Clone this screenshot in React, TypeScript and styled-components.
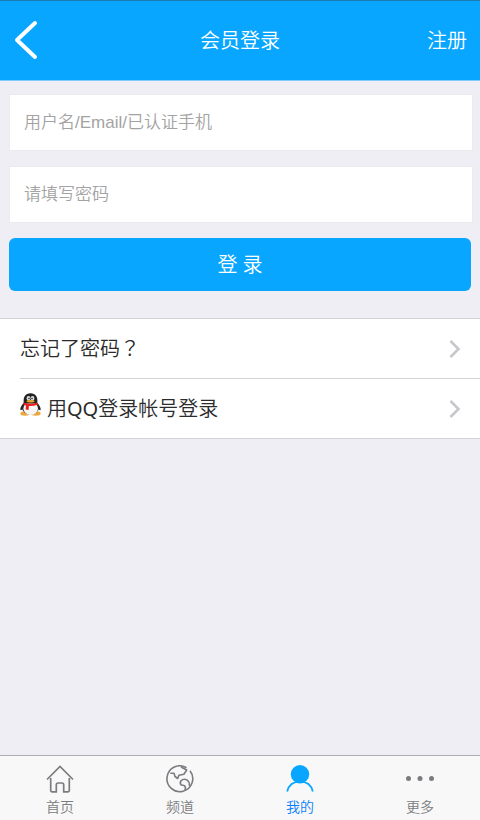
import React from "react";
import styled, { createGlobalStyle } from "styled-components";

const GlobalStyle = createGlobalStyle`
  * { box-sizing: border-box; }
  body {
    margin: 0;
    background: #efeef4;
    color: #2b2b2b;
    font-family: "Noto Sans", "Noto Sans CJK SC", sans-serif;
    font-size: 20px;
    font-weight: 350;
  }
  button, input { font-family: inherit; font-weight: inherit; }
`;

const Page = styled.div`
  display: flex;
  flex-direction: column;
  min-height: 100vh;
`;

const Header = styled.header`
  display: grid;
  grid-template-columns: 1fr auto 1fr;
  align-items: center;
  height: 81px;
  padding: 0 13px;
  background: #08a6ff;
  border-top: 1px solid #1b7bb5;
  border-bottom: 1px solid #7fcdfa;
  color: #fff;
`;

const BackButton = styled.button`
  display: flex;
  justify-self: start;
  padding: 0 0 2px;
  border: 0;
  background: none;
  color: inherit;
  cursor: pointer;
`;

const Title = styled.h1`
  margin: 0;
  font-size: 20px;
  font-weight: inherit;
  line-height: 30px;
`;

const RegisterLink = styled.a`
  justify-self: end;
  color: inherit;
  line-height: 30px;
  text-decoration: none;
`;

const Main = styled.main`
  flex: 1;
`;

const Form = styled.form`
  display: flex;
  flex-direction: column;
  gap: 15px;
  padding: 13px 7px 27px 9px;
`;

const Field = styled.input`
  width: 100%;
  height: 57px;
  padding: 0 14px;
  border: 1px solid #ebebed;
  border-radius: 0;
  outline: 0;
  background: #fff;
  color: #333;
  font-family: "Liberation Sans", "Noto Sans CJK SC", sans-serif;
  font-size: 17px;
  &::placeholder { color: #a3a3a3; opacity: 1; }
`;

const LoginButton = styled.button`
  height: 53px;
  margin-right: 2px;
  padding: 0;
  border: 0;
  border-radius: 6px;
  background: #08a6ff;
  color: #fff;
  font-size: 20px;
  line-height: 30px;
  cursor: pointer;
`;

const LinkList = styled.nav`
  padding-left: 20px;
  background: #fff;
  border-top: 1px solid #d3d3d6;
  border-bottom: 1px solid #d3d3d6;
`;

const LinkRow = styled.a`
  display: flex;
  align-items: center;
  gap: 6px;
  height: 59px;
  padding-right: 19px;
  color: inherit;
  line-height: 30px;
  text-decoration: none;
  & + & {
    height: 60px;
    border-top: 1px solid #d3d3d6;
  }
`;

const RowLabel = styled.span`
  flex: 1;
`;

const Latin = styled.span`
  font-weight: 400;
`;

const CenteredMark = styled.span`
  font-family: "Noto Sans CJK TC", sans-serif;
`;

const PenguinArt = styled.svg`
  margin-bottom: 8px;
`;

const TabBar = styled.nav`
  display: grid;
  grid-template-columns: repeat(4, 1fr);
  height: 65px;
  background: #f8f8f8;
  border-top: 1px solid #adadb0;
`;

const Tab = styled.a<{ $active?: boolean }>`
  display: flex;
  flex-direction: column;
  align-items: center;
  gap: 4px;
  padding-top: 9px;
  color: ${(p) => (p.$active ? "#0b7ffb" : "#7b7c80")};
  font-size: 14px;
  line-height: 20px;
  text-decoration: none;
`;

const BackIcon = () => (
  <svg width="26" height="40" viewBox="0 0 26 40" fill="none" stroke="#fff" strokeWidth="4" aria-hidden="true">
    <path d="M22 3 4 20l18 17" strokeLinejoin="round" strokeLinecap="round" />
  </svg>
);

const Chevron = () => (
  <svg width="12" height="18" viewBox="0 0 12 18" fill="none" stroke="#c7c7cc" strokeWidth="2.6" aria-hidden="true">
    <path d="m1.500 1 8 8-8 8" />
  </svg>
);

const Penguin = () => (
  <PenguinArt width="21" height="23" viewBox="0 0 21 23" aria-hidden="true">
    <path d="M4 10C1.600 12 .2 14.500.3 16.500c.2 1.200 1.600.6 2.700-.5L6 13z" fill="#222" />
    <path d="M17 10c2.400 2 3.800 4.500 3.700 6.500-.2 1.200-1.600.6-2.700-.5L15 13z" fill="#222" />
    <ellipse cx="5" cy="20.500" rx="4.600" ry="2.200" fill="#f0a83a" />
    <ellipse cx="16" cy="20.500" rx="4.600" ry="2.200" fill="#f0a83a" />
    <ellipse cx="10.500" cy="14.500" rx="8.500" ry="7" fill="#292727" />
    <ellipse cx="10.700" cy="15.500" rx="7.300" ry="6.500" fill="#f7f7f7" />
    <path d="M3.800 10.500C2.800 4 5.500.3 10.500.3S18.200 4 17.200 10.500z" fill="#222" />
    <ellipse cx="8.500" cy="5.200" rx="1.900" ry="2.200" fill="#ddd" />
    <ellipse cx="12.500" cy="5.200" rx="1.900" ry="2.200" fill="#ddd" />
    <circle cx="9" cy="5.500" r=".8" fill="#222" />
    <circle cx="12" cy="5.500" r=".8" fill="#222" />
    <ellipse cx="10.500" cy="8.200" rx="4" ry="1.200" fill="#e8a92c" />
    <path d="M3.500 9.500q7 2.600 14 0l.4 1.900q-4.500 1.800-9 1.500l-.3 4-3-.5.4-4-2.700-.9z" fill="#e9201f" />
  </PenguinArt>
);

const HomeIcon = () => (
  <svg width="28" height="28" viewBox="0 0 28 28" fill="none" stroke="currentColor" strokeWidth="1.700" aria-hidden="true">
    <path d="M1 14.500 14 1.500l13 13" />
    <path d="M4.700 13v12.500q0 1.300 1.300 1.300h4.300v-7q0-1.800 1.800-1.800h3.800q1.800 0 1.800 1.800v7H22q1.300 0 1.300-1.300V13" />
  </svg>
);

const GlobeIcon = () => (
  <svg width="28" height="28" viewBox="0 0 28 28" fill="none" stroke="currentColor" strokeWidth="1.600" strokeLinejoin="round" aria-hidden="true">
    <path d="M20.500 2.700A12.900 12.900 0 1 0 24 5.800" />
    <path d="M4.300 8.300 8 8.200l1 3.300 2.700 2 1.200-3.300 5-1 2.800-4.200-5.700-3" />
    <path d="M19 25.500q1-3.300-.4-4.800-1.700-.2-3.200-.6-2-2.200-.5-4.200 2.600-2.700 6-1 2.700 1.700 2.500 6" />
  </svg>
);

const UserIcon = () => (
  <svg width="28" height="28" viewBox="0 0 28 28" fill="none" aria-hidden="true">
    <circle cx="14" cy="9.300" r="9.200" fill="#08a6ff" />
    <path d="M1.200 26.500C2.500 21 6.800 16.700 14 16.700s11.500 4.300 12.800 9.800" stroke="#08a6ff" strokeWidth="1.800" />
  </svg>
);

const MoreIcon = () => (
  <svg width="28" height="28" viewBox="0 0 28 28" fill="currentColor" aria-hidden="true">
    <circle cx="2.500" cy="13.500" r="2.500" />
    <circle cx="14" cy="13.500" r="2.500" />
    <circle cx="25.500" cy="13.500" r="2.500" />
  </svg>
);

const tabs = [
  { label: "首页", Icon: HomeIcon },
  { label: "频道", Icon: GlobeIcon },
  { label: "我的", Icon: UserIcon, active: true },
  { label: "更多", Icon: MoreIcon },
];

export default function App() {
  return (
    <Page lang="zh-CN">
      <GlobalStyle />
      <Header>
        <BackButton type="button" aria-label="返回">
          <BackIcon />
        </BackButton>
        <Title>会员登录</Title>
        <RegisterLink href="#register">注册</RegisterLink>
      </Header>
      <Main>
        <Form onSubmit={(e) => e.preventDefault()}>
          <Field type="text" aria-label="用户名" placeholder="用户名/Email/已认证手机" />
          <Field type="password" aria-label="密码" placeholder="请填写密码" />
          <LoginButton type="submit">登 录</LoginButton>
        </Form>
        <LinkList>
          <LinkRow href="#forgot">
            <RowLabel>
              忘记了密码<CenteredMark lang="zh-TW">？</CenteredMark>
            </RowLabel>
            <Chevron />
          </LinkRow>
          <LinkRow href="#qq">
            <Penguin />
            <RowLabel>
              用<Latin>QQ</Latin>登录帐号登录
            </RowLabel>
            <Chevron />
          </LinkRow>
        </LinkList>
      </Main>
      <TabBar>
        {tabs.map(({ label, Icon, active }) => (
          <Tab key={label} href="#" $active={active} aria-current={active ? "page" : undefined}>
            <Icon />
            {label}
          </Tab>
        ))}
      </TabBar>
    </Page>
  );
}
